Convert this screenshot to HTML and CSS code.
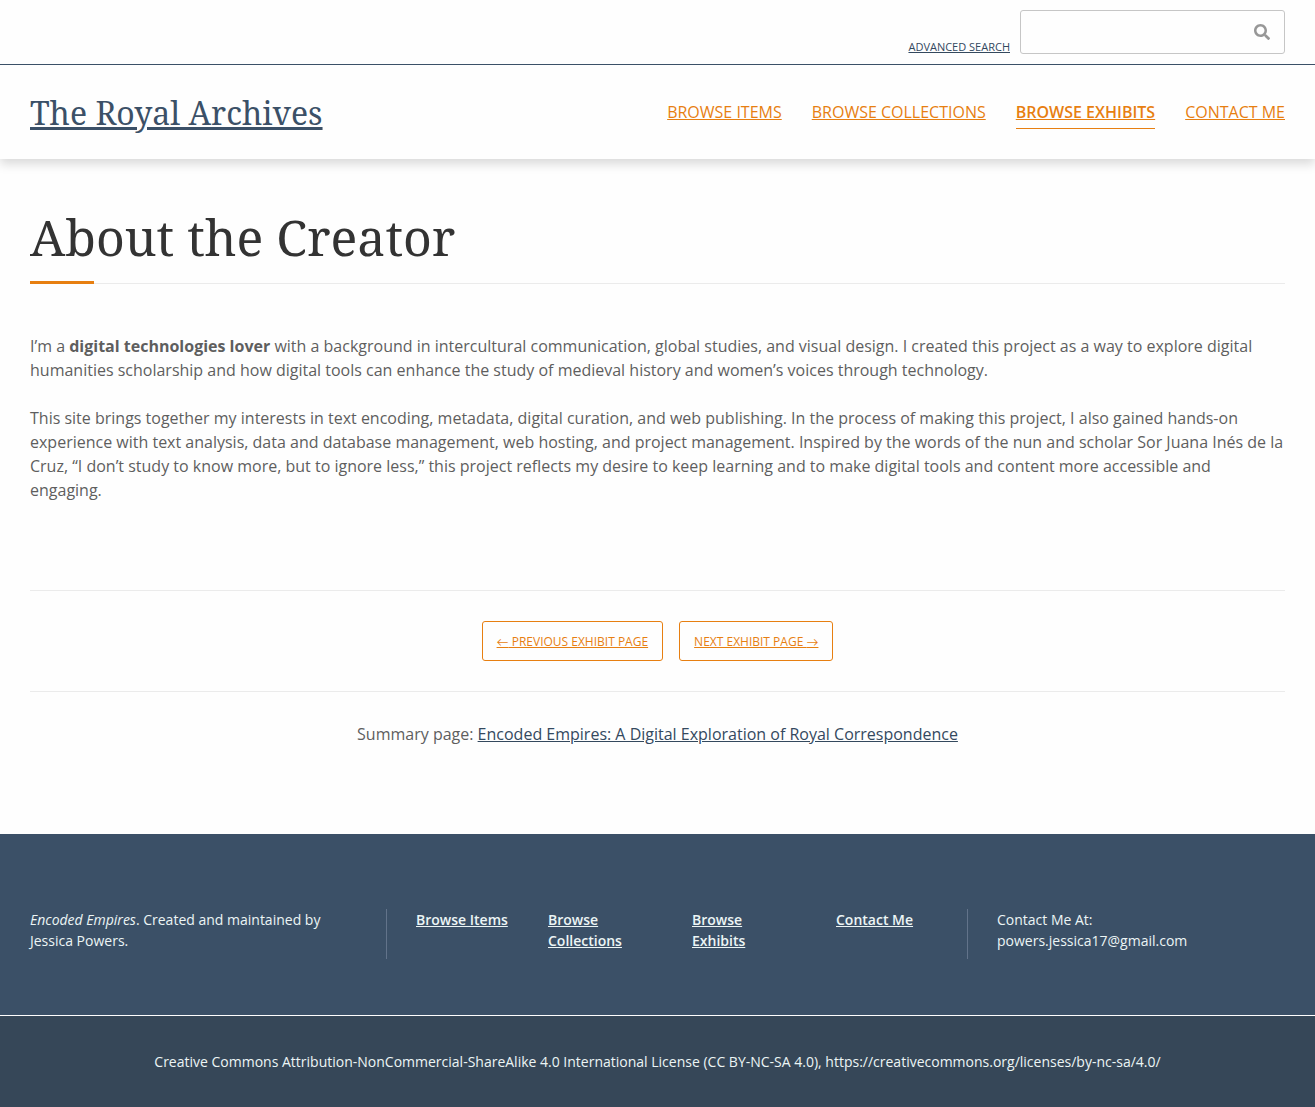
FILE: index.html
```html
<!DOCTYPE html>
<html lang="en">
<head>
<meta charset="utf-8">
<title>About the Creator</title>
<link rel="stylesheet" href="styles.css">
</head>
<body>
<div class="search-bar">
  <a class="advanced" href="#">Advanced Search</a>
  <form class="search-form">
    <input class="search-input" type="text" aria-label="Search">
    <svg class="search-icon" viewBox="0 0 512 512" aria-hidden="true"><path d="M505 442.700L405.300 343c-4.500-4.500-10.600-7-17-7H372c27.600-35.300 44-79.700 44-128C416 93.100 322.900 0 208 0S0 93.100 0 208s93.100 208 208 208c48.300 0 92.700-16.400 128-44v16.300c0 6.400 2.500 12.500 7 17l99.700 99.700c9.400 9.400 24.600 9.400 33.900 0l28.300-28.300c9.400-9.400 9.400-24.600.1-34zM208 336c-70.700 0-128-57.200-128-128 0-70.700 57.200-128 128-128 70.700 0 128 57.200 128 128 0 70.700-57.200 128-128 128z"/></svg>
  </form>
</div>
<header class="site-header">
  <a class="site-title" href="#">The Royal Archives</a>
  <nav class="main-nav">
    <a href="#">Browse Items</a>
    <a href="#">Browse Collections</a>
    <a class="active" href="#">Browse Exhibits</a>
    <a href="#">Contact Me</a>
  </nav>
</header>
<main class="content">
  <h1 class="page-title">About the Creator</h1>
  <div class="page-text">
    <p>I’m a <strong>digital technologies lover</strong> with a background in intercultural communication, global studies, and visual design. I created this project as a way to explore digital humanities scholarship and how digital tools can enhance the study of medieval history and women’s voices through technology.</p>
    <p>This site brings together my interests in text encoding, metadata, digital curation, and web publishing. In the process of making this project, I also gained hands-on experience with text analysis, data and database management, web hosting, and project management. Inspired by the words of the nun and scholar Sor Juana Inés de la Cruz, “I don’t study to know more, but to ignore less,” this project reflects my desire to keep learning and to make digital tools and content more accessible and engaging.</p>
  </div>
  <div class="pagination">
    <a class="button" href="#"><span class="arrow">←</span> Previous Exhibit Page</a>
    <a class="button" href="#">Next Exhibit Page <span class="arrow">→</span></a>
  </div>
  <p class="summary">Summary page: <a href="#">Encoded Empires: A Digital Exploration of Royal Correspondence</a></p>
</main>
<footer class="site-footer">
  <div class="footer-main">
    <p class="footer-about"><em>Encoded Empires</em>. Created and maintained by Jessica Powers.</p>
    <nav class="footer-nav">
      <a href="#">Browse Items</a>
      <a href="#">Browse Collections</a>
      <a href="#">Browse Exhibits</a>
      <a href="#">Contact Me</a>
    </nav>
    <p class="footer-contact">Contact Me At: powers.jessica17@gmail.com</p>
  </div>
  <div class="footer-license">Creative Commons Attribution-NonCommercial-ShareAlike 4.0 International License (CC BY-NC-SA 4.0), https://creativecommons.org/licenses/by-nc-sa/4.0/</div>
</footer>
</body>
</html>
```
FILE: styles.css
```css
* { box-sizing: border-box; }
body { margin: 0; background: #fefefe; color: #5e5e5e; font: 16px/24px "Open Sans", sans-serif; }
p { margin: 0; }

.search-bar { position: relative; z-index: 1; display: flex; justify-content: flex-end; align-items: flex-end; gap: 10px; height: 65px; padding: 10px 30px; border-bottom: 1px solid #3b5067; background: #fefefe; }
.advanced { color: #34495e; font-size: 11px; line-height: 14px; text-transform: uppercase; }
.search-form { position: relative; width: 265px; height: 44px; }
.search-input { display: block; width: 100%; height: 100%; border: 1px solid #c6c6c6; border-radius: 3px; background: #fefefe; }
.search-icon { position: absolute; top: 14px; right: 15px; width: 16px; height: 16px; fill: #979797; }

.site-header { display: flex; justify-content: space-between; align-items: flex-start; height: 94px; padding: 24px 30px 0; box-shadow: 0 5px 10px rgba(0, 0, 0, 0.15); }
.site-title { color: #3b5067; font: 32px/48px "Noto Serif", "Droid Serif", "Liberation Serif", serif; }
.main-nav { display: flex; gap: 30px; padding-top: 11px; text-transform: uppercase; }
.main-nav a { color: #e77f11; }
.main-nav .active { padding-bottom: 4px; border-bottom: 1px solid #e77f11; font-weight: 600; }

.content { padding: 49px 30px 88px; }
.page-title { position: relative; height: 76px; margin: 0 0 50px; border-bottom: 1px solid #ebebeb; color: #333; font: 400 50px/58px "Noto Serif", "Droid Serif", "Liberation Serif", serif; }
.page-title::after { content: ""; position: absolute; left: 0; bottom: -1px; width: 64px; height: 3px; background: #e77f11; }
.page-text { display: grid; gap: 24px; }
.pagination { display: flex; justify-content: center; gap: 16px; margin-top: 88px; padding: 30px 0; border: solid #ebebeb; border-width: 1px 0; }
.button { height: 40px; padding: 0 14px; border: 1px solid #e77f11; border-radius: 3px; color: #e77f11; font-size: 12px; line-height: 39px; text-transform: uppercase; }
.arrow { font-family: Lato, sans-serif; }
.summary { margin-top: 30px; text-align: center; }
.summary a { color: #34495e; }

.site-footer { background: #3b5067; color: #ecf5f5; font-size: 14px; line-height: 21px; }
.footer-main { display: flex; height: 181px; padding: 75px 30px 56px; }
.footer-about { width: 356px; padding-right: 50px; }
.footer-nav { display: grid; grid-template-columns: 92px 104px 104px 104px; gap: 40px; width: 582px; padding-left: 29px; border: solid #62738a; border-width: 0 1px; font-weight: 600; }
.footer-nav a { color: #ecf5f5; }
.footer-nav a:first-child { white-space: nowrap; }
.footer-contact { width: 230px; padding-left: 29px; }
.footer-license { height: 92px; padding-top: 35px; border-top: 1px solid #fefefe; background: #364758; text-align: center; }
```
